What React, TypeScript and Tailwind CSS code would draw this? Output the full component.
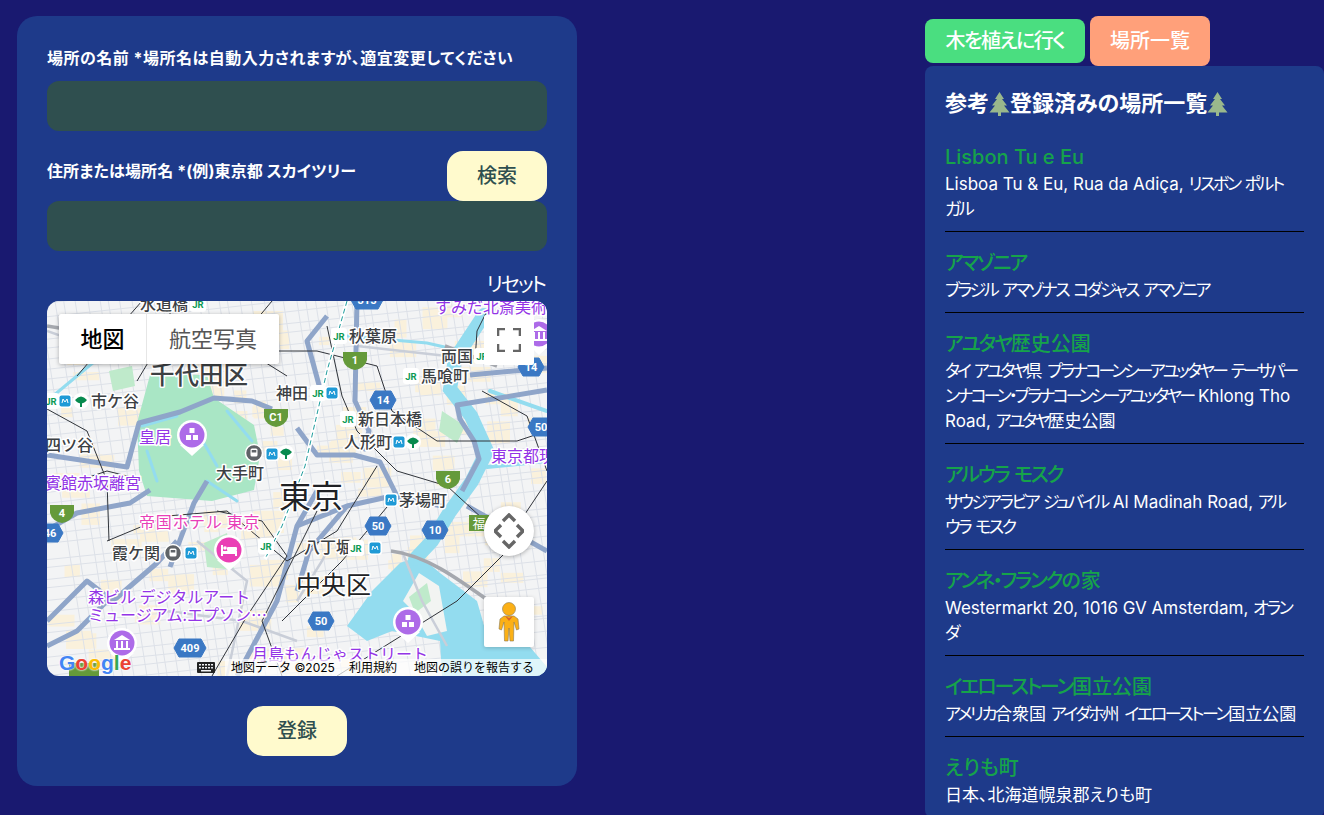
import type { ReactNode } from "react";

const PLACES = [
  { name: "Lisbon Tu e Eu", address: "Lisboa Tu & Eu, Rua da Adiça, リスボン ポルト\nガル" },
  { name: "アマゾニア", address: "ブラジル アマゾナス コダジャス アマゾニア" },
  { name: "アユタヤ歴史公園", address: "タイ アユタヤ県 プラナコーンシーアユッタヤー テーサパー\nンナコーン・プラナコーンシーアユッタヤー Khlong Tho\nRoad, アユタヤ歴史公園", tight: true },
  { name: "アルウラ モスク", address: "サウジアラビア ジュバイル Al Madinah Road, アル\nウラ モスク" },
  { name: "アンネ・フランクの家", address: "Westermarkt 20, 1016 GV Amsterdam, オラン\nダ" },
  { name: "イエローストーン国立公園", address: "アメリカ合衆国 アイダホ州 イエローストーン国立公園" },
  { name: "えりも町", address: "日本、北海道幌泉郡えりも町" },
];

// 街路の細い線は擬似乱数で敷く
function rand(seed: number) {
  const x = Math.sin(seed * 127.1) * 43758.5453;
  return x - Math.floor(x);
}

const STREETS: string[] = [];
for (let i = 0; i < 38; i++) {
  const y = i * 11 + rand(i) * 6 - 10;
  STREETS.push(`M-10 ${y} L510 ${y - 60 + rand(i + 50) * 8}`);
}
for (let i = 0; i < 50; i++) {
  const x = i * 11 + rand(i + 9) * 6 - 20;
  STREETS.push(`M${x} -10 L${x + 62} 385`);
}

const BLOCKS = Array.from({ length: 120 }, (_, i) => ({
  x: rand(i + 200) * 500,
  y: rand(i + 300) * 375,
  w: 10 + rand(i + 400) * 22,
  h: 8 + rand(i + 500) * 16,
}));

const MAJOR_ROADS = [
  "M0 154 L80 166 L92 122 L133 111 L167 97 L205 100 L225 108",
  "M310 0 L308 100 L322 130 L316 150",
  "M423 74 L500 67",
  "M500 89 L410 104 L413 118 L427 140 L432 158 L415 190",
  "M250 127 L270 154 L307 154 L333 161 L350 195",
  "M0 229 L30 212 L83 202 L103 189",
  "M123 266 L133 239 L147 202 L160 180",
  "M66 300 L110 262 L130 240",
  "M0 320 L40 280 L66 300",
  "M250 225 L300 205 L345 195 L395 205",
  "M280 15 L260 40 L275 95",
  "M190 375 L230 300 L250 225 L270 190",
  "M0 345 L30 330 L60 300",
  "M420 205 L500 250",
  "M250 290 L262 250 L300 205",
];

const LIGHT_ROADS = [
  "M250 300 L275 260 L285 240",
  "M355 250 L375 300 L400 345",
  "M0 30 L70 55 L190 30",
  "M310 45 L400 55",
  "M428 60 L500 30",
  "M120 310 L195 320 L250 340",
  "M150 240 L200 280 L180 375",
];

const RAILS = [
  "M95 0 L60 40 L30 75",
  "M0 108 L40 130 L60 180 L62 240",
  "M128 0 L108 50 L90 80",
  "M240 75 L200 50 L270 50 L330 65 L345 110 L390 140 L470 140 L500 130",
  "M280 25 L295 95 L310 130 L350 170 L400 185 L460 240 L500 180",
  "M0 190 L60 170 L92 178",
  "M60 240 L120 215 L180 210 L240 260 L290 230 L330 165",
  "M170 210 L215 220 L240 255 L200 315 L165 375",
  "M270 210 L215 320 L235 375",
  "M290 375 L410 300 L470 240",
  "M225 0 L200 30",
  "M435 90 L480 115 L500 170",
  "M428 60 L430 30 L445 0",
  "M235 320 L295 260 L345 200",
];

// カタカナだけ字間を詰める
function Narrow({ text, tracking }: { text: string; tracking: string }) {
  return (
    <>
      {text.split(/([ァ-ヶ・ー]+)/).map((part, i) =>
        i % 2 === 1 ? (
          <span key={i} className={tracking}>
            {part}
          </span>
        ) : (
          part
        ),
      )}
    </>
  );
}

function Label({ x, y, s = 16, c, spacing, children }: { x: number; y: number; s?: number; c?: string; spacing?: number; children: ReactNode }) {
  return (
    <text x={x} y={y} fontSize={s} fontWeight={c ? 400 : 500} letterSpacing={spacing} fill={c ?? "#3c4043"} stroke="#fff" strokeWidth={3} strokeLinejoin="round" paintOrder="stroke" fontFamily="'Noto Sans CJK JP', sans-serif">
      {children}
    </text>
  );
}

function Shield({ x, y, n, green }: { x: number; y: number; n: string; green?: boolean }) {
  const w = n.length * 6 + 4;
  return (
    <g>
      {green ? (
        <path d={`M${x - 12} ${y - 8} H${x + 12} V${y} Q${x + 10} ${y + 8} ${x} ${y + 10} Q${x - 10} ${y + 8} ${x - 12} ${y} Z`} fill="#659a3a" />
      ) : (
        <path d={`M${x - w / 2} ${y - 9} H${x + w / 2} L${x + w / 2 + 5} ${y} L${x + w / 2} ${y + 9} H${x - w / 2} L${x - w / 2 - 5} ${y} Z`} fill="#3a78c4" stroke="#3a78c4" strokeWidth={1} strokeLinejoin="round" />
      )}
      <text x={x} y={y + 4} fontSize={11} fontWeight={700} fill="#fff" textAnchor="middle" fontFamily="Roboto, sans-serif">
        {n}
      </text>
    </g>
  );
}

function Jr({ x, y }: { x: number; y: number }) {
  return (
    <g>
      <rect x={x - 8} y={y - 8} width={16} height={16} rx={3} fill="#fff" />
      <text x={x} y={y + 3.5} fontSize={9.5} fontWeight={700} fill="#0d9a55" textAnchor="middle" fontFamily="Roboto, sans-serif">
        JR
      </text>
    </g>
  );
}

function Metro({ x, y }: { x: number; y: number }) {
  return (
    <g>
      <rect x={x - 7} y={y - 7} width={14} height={14} rx={3} fill="#fff" />
      <rect x={x - 5.5} y={y - 5.5} width={11} height={11} rx={2} fill="#1f9ad6" />
      <path d={`M${x - 3} ${y + 2} L${x - 2} ${y - 2} L${x} ${y + 1} L${x + 2} ${y - 2} L${x + 3} ${y + 2}`} fill="none" stroke="#fff" strokeWidth={1} />
    </g>
  );
}

function MapTree({ x, y }: { x: number; y: number }) {
  return (
    <g>
      <circle cx={x} cy={y} r={8} fill="#fff" />
      <path d={`M${x - 6} ${y - 1} Q${x} ${y - 8} ${x + 6} ${y - 1} Q${x + 3} ${y + 3} ${x + 1} ${y + 2} L${x + 1} ${y + 6} H${x - 1} L${x - 1} ${y + 2} Q${x - 3} ${y + 3} ${x - 6} ${y - 1} Z`} fill="#078a4e" />
    </g>
  );
}

function Subway({ x, y }: { x: number; y: number }) {
  return (
    <g>
      <circle cx={x} cy={y} r={8.5} fill="#5f6368" stroke="#fff" strokeWidth={1.5} />
      <rect x={x - 3.5} y={y - 4.5} width={7} height={8} rx={1.5} fill="#fff" />
      <rect x={x - 2.3} y={y - 3} width={4.6} height={2.5} fill="#5f6368" />
    </g>
  );
}

function Pin({ x, y, color, kind }: { x: number; y: number; color: string; kind: "blocks" | "museum" | "hotel" }) {
  return (
    <g>
      <path d={`M${x - 12} ${y + 10} L${x} ${y + 21} L${x + 12} ${y + 10} Z`} fill="#fff" />
      <circle cx={x} cy={y} r={15} fill="#fff" />
      <circle cx={x} cy={y} r={12.5} fill={color} />
      {kind === "blocks" && (
        <g fill="#fff">
          <rect x={x - 2.5} y={y - 7} width={5} height={5} />
          <rect x={x - 6} y={y} width={5} height={5} />
          <rect x={x + 1} y={y} width={5} height={5} />
        </g>
      )}
      {kind === "museum" && (
        <g fill="#fff">
          <path d={`M${x - 8} ${y - 3} L${x} ${y - 8} L${x + 8} ${y - 3} Z`} />
          <rect x={x - 6} y={y - 2} width={2} height={7} />
          <rect x={x - 1} y={y - 2} width={2} height={7} />
          <rect x={x + 4} y={y - 2} width={2} height={7} />
          <rect x={x - 8} y={y + 5} width={16} height={2} />
        </g>
      )}
      {kind === "hotel" && (
        <g fill="#fff">
          <rect x={x - 8} y={y - 5} width={2} height={11} />
          <rect x={x - 6} y={y + 1} width={14} height={3} />
          <rect x={x + 6} y={y + 3} width={2} height={3} />
          <rect x={x - 2} y={y - 3} width={10} height={4} rx={1} />
          <circle cx={x - 4} cy={y - 2} r={1.8} />
        </g>
      )}
    </g>
  );
}

function TokyoMap() {
  return (
    <svg viewBox="0 0 500 375" className="block h-full w-full [font-feature-settings:normal]">
      <rect width="500" height="375" fill="#f3f4f5" />
      {BLOCKS.map((b, i) => (
        <rect key={i} x={b.x} y={b.y} width={b.w} height={b.h} fill="#faf1dc" />
      ))}
      <g fill="none" stroke="#dde1e8" strokeWidth={1}>
        {STREETS.map((d, i) => (
          <path key={i} d={d} />
        ))}
      </g>
      {/* 皇居と公園 */}
      <path d="M103 74 L160 74 L167 97 L207 124 L213 154 L207 189 L165 200 L100 195 L92 170 L90 122 Z" fill="#a9e6c5" />
      <path d="M157 242 L180 232 L187 269 L160 266 Z M395 110 L418 125 L410 142 L392 130 Z M62 70 L85 65 L88 85 L66 90 Z" fill="#bfeacb" />
      {/* 水面 */}
      <path d="M353 262 L373 255 L393 272 L430 300 L440 335 L483 346 L500 366 L500 375 L395 375 L393 340 L345 330 L320 340 L300 325 L325 290 Z" fill="#93dcef" />
      <path d="M372 272 L392 285 L400 330 L380 335 L366 310 L356 300 Z" fill="#f2f4f2" />
      <path d="M362 296 L380 282 L384 300 L368 312 Z" fill="#bfeacb" />
      <g fill="none" stroke="#93dcef" strokeLinecap="round">
        <path d="M437 14 L408 58 L403 88 L424 115 L440 150 L425 180 L402 212 L385 240 L368 258" strokeWidth={14} />
        <path d="M300 35 L380 42 L415 50" strokeWidth={3} />
        <path d="M95 125 L130 115 M100 150 L110 180 M150 130 L170 165 M180 110 L205 140 M160 180 L190 200" strokeWidth={3} />
        <path d="M440 166 L500 160" strokeWidth={4} />
        <path d="M0 100 L30 75 L48 60" strokeWidth={3} />
        <path d="M443 90 L500 110" strokeWidth={4} />
      </g>
      <g fill="none" stroke="#c9ced8" strokeWidth={2.5}>
        {LIGHT_ROADS.map((d) => (
          <path key={d} d={d} />
        ))}
      </g>
      <g fill="none" stroke="#8fa5c9" strokeWidth={5} strokeLinejoin="round">
        {MAJOR_ROADS.map((d) => (
          <path key={d} d={d} />
        ))}
      </g>
      <g fill="none" stroke="#a5a8ae" strokeWidth={3.5}>
        <path d="M344 250 C 385 255 420 285 470 320" />
        <path d="M398 45 L450 65" />
        <path d="M0 25 L60 35" />
      </g>
      <g fill="none" stroke="#30343a" strokeWidth={1}>
        {RAILS.map((d) => (
          <path key={d} d={d} />
        ))}
      </g>
      <path d="M300 0 L280 70 L258 165 L235 225 L218 258" fill="none" stroke="#fff" strokeWidth={4} />
      <path d="M300 0 L280 70 L258 165 L235 225 L218 258" fill="none" stroke="#1f9c9c" strokeWidth={1} strokeDasharray="5 3" />

      <Shield x={320} y={-1} n="315" />
      <Shield x={308} y={59} n="1" green />
      <Shield x={336} y={99} n="14" />
      <Shield x={229} y={116} n="C1" green />
      <Shield x={484} y={66} n="14" />
      <Shield x={494} y={126} n="50" />
      <Shield x={401} y={178} n="6" green />
      <Shield x={15} y={212} n="4" green />
      <Shield x={3} y={232} n="46" />
      <Shield x={331} y={225} n="50" />
      <Shield x={388} y={229} n="10" />
      <Shield x={274} y={320} n="50" />
      <Shield x={143} y={347} n="409" />

      <Pin x={145} y={134} color="#ad6be8" kind="blocks" />
      <Pin x={182} y={249} color="#ea3fb5" kind="hotel" />
      <Pin x={75} y={342} color="#ad6be8" kind="museum" />
      <Pin x={361} y={321} color="#ad6be8" kind="blocks" />
      <Pin x={492} y={33} color="#ad6be8" kind="museum" />

      <Label x={93} y={9}>水道橋</Label>
      <Jr x={151} y={3} />
      <Label x={103} y={83} s={24.5}>千代田区</Label>
      <Label x={44} y={106}>市ケ谷</Label>
      <Jr x={4} y={100} />
      <Metro x={18} y={100} />
      <MapTree x={34} y={100} />
      <Label x={-2} y={150}>四ツ谷</Label>
      <Label x={92} y={142} c="#9334e6">皇居</Label>
      <Label x={169} y={178}>大手町</Label>
      <Subway x={207} y={152} />
      <Metro x={225} y={153} />
      <MapTree x={239} y={152} />
      <Label x={-2} y={188} c="#9334e6">賓館赤坂離宮</Label>
      <Label x={232} y={207} s={32} c="#202124">東京</Label>
      <Label x={229} y={98}>神田</Label>
      <Jr x={271} y={92} />
      <Metro x={285} y={92} />
      <Label x={302} y={41}>秋葉原</Label>
      <Jr x={292} y={35} />
      <Label x={394} y={61}>両国</Label>
      <Jr x={435} y={55} />
      <Label x={374} y={81}>馬喰町</Label>
      <Jr x={364} y={75} />
      <Label x={311} y={124}>新日本橋</Label>
      <Jr x={301} y={118} />
      <Label x={297} y={147}>人形町</Label>
      <Metro x={352} y={141} />
      <MapTree x={366} y={141} />
      <Label x={444} y={161} c="#9334e6">東京都現</Label>
      <Label x={352} y={205}>茅場町</Label>
      <Metro x={344} y={199} />
      <Label x={257} y={252}>八丁堀</Label>
      <Jr x={309} y={247} />
      <Metro x={328} y={247} />
      <Label x={249} y={293} s={25} c="#202124">中央区</Label>
      <Label x={65} y={258}>霞ケ関</Label>
      <Subway x={126} y={252} />
      <Metro x={144} y={252} />
      <Jr x={219} y={245} />
      <Label x={92} y={227} c="#e83fb8" spacing={0.7}>帝国ホテル 東京</Label>
      <Label x={41} y={302} c="#9334e6">森ビル デジタルアート</Label>
      <Label x={41} y={320} c="#9334e6">ミュージアム:エプソン…</Label>
      <Label x={205} y={359} c="#9334e6">月島もんじゃストリート</Label>
      <Label x={388} y={12} c="#9334e6">すみだ北斎美術館</Label>
      <rect x={422} y={214} width={20} height={16} fill="#659a3a" />
      <text x={432} y={227} fontSize={13} fill="#fff" textAnchor="middle" fontFamily="'Noto Sans CJK JP', sans-serif">福</text>
      <rect x={22} y={362} width={30} height={13} fill="#659a3a" />
    </svg>
  );
}

function GoogleMapsOverlay() {
  return (
    <>
      <div className="absolute left-[12px] top-[13px] flex h-[50px] w-[220px] rounded-[2px] bg-white text-[22px] shadow-[0_1px_4px_rgba(0,0,0,0.3)]">
        <div className="flex w-[88px] items-center justify-center border-r border-[#e6e6e6] font-medium text-black">地図</div>
        <div className="flex flex-1 items-center justify-center text-[#565656]">航空写真</div>
      </div>
      <div className="absolute left-[437px] top-[14px] flex h-[50px] w-[50px] items-center justify-center rounded-[2px] bg-white">
        <svg width="24" height="24" viewBox="0 0 24 24" fill="none" stroke="#666" strokeWidth="2.6">
          <path d="M1 8V1h7M16 1h7v7M23 16v7h-7M8 23H1v-7" />
        </svg>
      </div>
      <div className="absolute left-[437px] top-[205px] flex h-[50px] w-[50px] items-center justify-center rounded-full bg-white shadow-[0_1px_4px_rgba(0,0,0,0.3)]">
        <svg width="30" height="36" viewBox="0 0 30 36" fill="none" stroke="#666" strokeWidth="3.4">
          <path d="M9 8 15 2l6 6M9 28l6 6 6-6M7 12l-6 6 6 6M23 12l6 6-6 6" />
        </svg>
      </div>
      <div className="absolute left-[437px] top-[296px] flex h-[50px] w-[50px] items-center justify-center rounded-[2px] bg-white shadow-[0_1px_4px_rgba(0,0,0,0.2)]">
        <svg width="22" height="40" viewBox="0 0 22 40">
          <circle cx="11" cy="7" r="6.5" fill="#fbb016" stroke="#8a7a55" strokeWidth="0.6" />
          <path d="M6 14h10l4 3 1 10-2.500 1L16 20l-.5 19H12l-1-13-1 13H6.500L6 20l-2.500 8L1 27l1-10Z" fill="#fbb016" stroke="#8a7a55" strokeWidth="0.6" />
          <path d="M7 14l4 5 4-5-4 2Z" fill="#d9622b" />
        </svg>
      </div>
      <div className="absolute bottom-[3px] left-[12px] font-['Liberation_Sans',sans-serif] text-[21px] font-bold leading-none [text-shadow:0_0_2px_#fff,0_0_2px_#fff]">
        <span className="text-[#4285f4]">G</span>
        <span className="text-[#ea4335]">o</span>
        <span className="text-[#fbbc05]">o</span>
        <span className="text-[#4285f4]">g</span>
        <span className="text-[#34a853]">l</span>
        <span className="text-[#ea4335]">e</span>
      </div>
      <div className="absolute bottom-[3px] left-[150px]">
        <svg width="18" height="11" viewBox="0 0 18 11" fill="#222">
          <path d="M1 0h16a1 1 0 0 1 1 1v9a1 1 0 0 1-1 1H1a1 1 0 0 1-1-1V1a1 1 0 0 1 1-1Zm1 2v1.500h2V2Zm3 0v1.500h2V2Zm3 0v1.500h2V2Zm3 0v1.500h2V2Zm3 0v1.500h2V2ZM2 5v1.500h2V5Zm3 0v1.500h2V5Zm3 0v1.500h2V5Zm3 0v1.500h2V5Zm3 0v1.500h2V5ZM4 8v1.500h10V8Z" fillRule="evenodd" />
        </svg>
      </div>
      <div className="absolute bottom-0 right-0 flex h-[17px] w-[322px] items-center bg-white/70 pl-[6px] text-[12px] leading-none text-black [font-feature-settings:normal]">
        <span className="w-[118px] whitespace-nowrap">地図データ ©2025</span>
        <span className="w-[65px] whitespace-nowrap">利用規約</span>
        <span className="whitespace-nowrap">地図の誤りを報告する</span>
      </div>
    </>
  );
}

function TreeIcon() {
  return (
    <svg width="21" height="24" viewBox="0 0 20 24" className="mb-[3px] inline-block align-middle" fill="#9ab88c">
      <path d="M10 0l4.500 7H12.500l5 6.500H14.500L20 20.500H11.500V24h-3v-3.500H0L5.500 13.500H2.500l5-6.500H5.500Z" />
    </svg>
  );
}

function FormButton({ children }: { children: ReactNode }) {
  return (
    <button type="button" className="flex h-[50px] w-[100px] items-center justify-center rounded-[16px] bg-[#fffacd] text-[20px] font-medium text-[#2f4f4f]">
      {children}
    </button>
  );
}

export default function App() {
  return (
    <div className="flex h-[815px] overflow-hidden bg-[#191970] font-['Inter','Noto_Sans_CJK_JP',sans-serif] text-white [font-feature-settings:'palt']">
      <div className="ml-[17px] mt-4 h-[770px] w-[560px] shrink-0 rounded-[20px] bg-[#1e3a8a] px-[30px] pt-[30px]">
        <label className="block text-[16px] font-bold leading-[24px] tracking-[0.5px]">場所の名前 *場所名は自動入力されますが、適宜変更してください</label>
        <div className="mt-[11px] h-[50px] rounded-xl bg-[#2f4f4f]" />
        <div className="mt-5 flex h-[50px] justify-between">
          <label className="pt-2 text-[16px] font-bold leading-[24px] tracking-[0.1px]">住所または場所名 *(例)東京都 スカイツリー</label>
          <FormButton>検索</FormButton>
        </div>
        <div className="h-[50px] rounded-xl bg-[#2f4f4f]" />
        <div className="mt-[22px] h-[28px] pr-[2px] text-right text-[20px] leading-[24px] tracking-[-0.1em]">リセット</div>
        <div className="relative h-[375px] overflow-hidden rounded-xl">
          <TokyoMap />
          <GoogleMapsOverlay />
        </div>
        <div className="mt-[30px] flex justify-center">
          <FormButton>登録</FormButton>
        </div>
      </div>
      <div className="ml-[348px] w-[399px] min-w-0 shrink-0">
        <div className="flex h-[66px] items-center gap-[5px] pt-4">
          <button type="button" className="h-11 w-40 rounded-lg bg-[#4ade80] text-[20px] font-medium tracking-[-1.5px] text-white">木を植えに行く</button>
          <button type="button" className="h-[50px] w-[120px] rounded-lg bg-[#ffa07a] text-[20px] font-medium text-white">場所一覧</button>
        </div>
        <div className="rounded-lg bg-[#1e3a8a] px-5 pt-[22px]">
          <h2 className="text-[22px] font-bold leading-[30px]">
            参考<TreeIcon />登録済みの場所一覧<TreeIcon />
          </h2>
          <ul className="mt-[7px]">
            {PLACES.map((p) => (
              <li key={p.name} className="border-b border-black pb-[9px] pt-[16px]">
                <div className="text-[20px] font-medium leading-[30px] text-[#16a34a]">
                  <Narrow text={p.name} tracking="tracking-[-0.11em]" />
                </div>
                <div className="whitespace-pre text-[17px] leading-[25px]">
                  <Narrow text={p.address} tracking={p.tight ? "tracking-[-0.17em]" : "tracking-[-0.14em]"} />
                </div>
              </li>
            ))}
          </ul>
        </div>
      </div>
    </div>
  );
}
